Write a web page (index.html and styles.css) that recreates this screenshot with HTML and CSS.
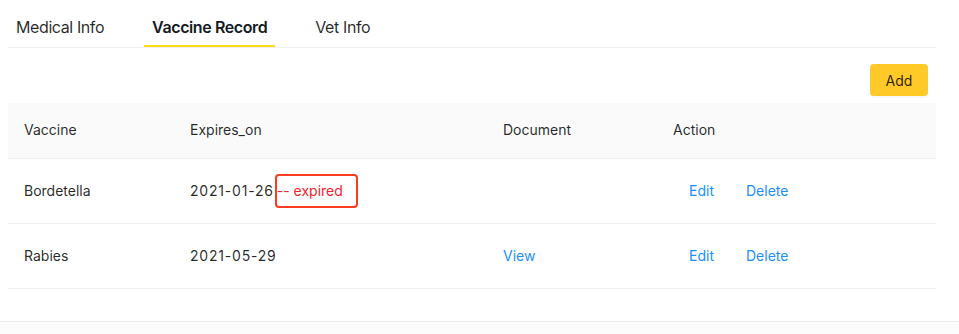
FILE: index.html
```html
<!DOCTYPE html>
<html lang="en">
<head>
    <meta charset="UTF-8">
    <meta name="viewport" content="width=device-width, initial-scale=1.0">
    <title>Vaccine Record</title>
    <link rel="stylesheet" href="styles.css">
</head>
<body>
    <div class="panel">
        <div class="tabs">
            <div class="tab">Medical Info</div>
            <div class="tab active">Vaccine Record</div>
            <div class="tab">Vet Info</div>
        </div>

        <div class="toolbar">
            <button class="add-btn">Add</button>
        </div>

        <table class="records">
            <colgroup>
                <col class="col-vaccine">
                <col class="col-expires">
                <col class="col-doc">
                <col>
            </colgroup>
            <thead>
                <tr>
                    <th>Vaccine</th>
                    <th>Expires_on</th>
                    <th>Document</th>
                    <th>Action</th>
                </tr>
            </thead>
            <tbody>
                <tr>
                    <td>Bordetella</td>
                    <td><span class="date">2021-01-26</span><span class="expired">-- expired</span></td>
                    <td></td>
                    <td class="actions"><a class="link-btn">Edit</a><a class="link-btn">Delete</a></td>
                </tr>
                <tr>
                    <td>Rabies</td>
                    <td><span class="date">2021-05-29</span></td>
                    <td><a class="link">View</a></td>
                    <td class="actions"><a class="link-btn">Edit</a><a class="link-btn">Delete</a></td>
                </tr>
            </tbody>
        </table>
    </div>
    <div class="footer"></div>
</body>
</html>
```

FILE: styles.css
```css
body {
    font-family: Inter, "Noto Sans", sans-serif;
    font-size: 14px;
    color: rgba(0, 0, 0, 0.85);
    background-color: #fff;
    margin: 0;
}
.panel {
    width: 928px;
    margin-left: 8px;
}
.tabs {
    display: flex;
    gap: 32px;
    border-bottom: 1px solid #f0f0f0;
    height: 47px;
}
.tab {
    padding: 0 8px;
    font-size: 16px;
    letter-spacing: -0.4px;
    line-height: 24px;
    padding-top: 15px;
    height: 32px;
    color: rgba(0, 0, 0, 0.85);
}
.tab.active {
    font-weight: 600;
    color: #141a22;
    border-bottom: 2px solid #fadb14;
    height: 30px;
}
.toolbar {
    display: flex;
    justify-content: flex-end;
    padding: 16px 8px 7px 0;
}
.add-btn {
    width: 58px;
    height: 32px;
    background-color: #ffca28;
    color: rgba(0, 0, 0, 0.85);
    border: none;
    border-radius: 4px;
    font-family: inherit;
    font-size: 14px;
    box-shadow: 0 2px 0 rgba(0, 0, 0, 0.03);
}
.records {
    width: 100%;
    border-collapse: collapse;
    table-layout: fixed;
}
.col-vaccine { width: 166px; }
.col-expires { width: 313px; }
.col-doc { width: 170px; }
.records th {
    background-color: #fafafa;
    font-weight: 400;
    text-align: left;
    padding: 16px 16px 17px;
    line-height: 22px;
    border-bottom: 1px solid #f0f0f0;
}
.records td {
    padding: 0 16px;
    height: 64px;
    line-height: 22px;
    border-bottom: 1px solid #f0f0f0;
}
.date {
    letter-spacing: 0.8px;
}
.expired {
    display: inline-block;
    color: #f5222d;
    border: 2px solid #ff3b1f;
    border-radius: 4px;
    padding: 4px 13px 4px 0;
    margin-left: 1px;
}
.link {
    color: #1890ff;
}
.actions {
    white-space: nowrap;
}
.link-btn {
    display: inline-block;
    color: #1890ff;
    padding: 0 16px;
}
.footer {
    margin-top: 32px;
    border-top: 1px solid #ececec;
    height: 13px;
    background-color: #fcfcfc;
}
```
